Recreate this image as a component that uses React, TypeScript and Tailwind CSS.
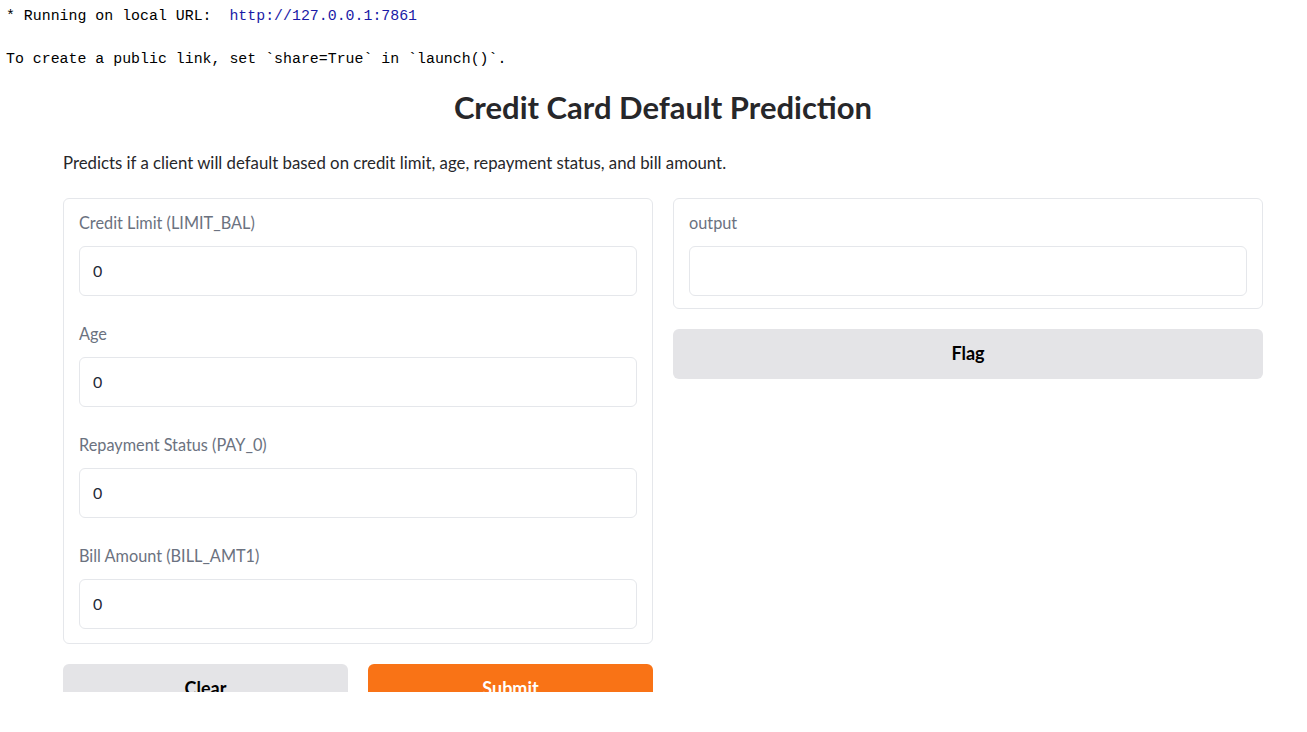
import React from "react";

const sans = { fontFamily: "Lato, 'Noto Sans', sans-serif" };

function Field({ label, value }: { label: string; value: string }) {
  return (
    <div className="flex flex-col">
      <div className="h-[24px] leading-[24px] text-[16.3px] text-[#6b7280] mb-[11px]">{label}</div>
      <div className="h-[50px] rounded-[6px] border border-[#e5e7eb] bg-white flex items-center px-[13px] text-[16px] text-[#1f2937]">
        {value}
      </div>
    </div>
  );
}

export default function App() {
  return (
    <div className="bg-white w-[1307px] h-[732px]">
      <div className="h-[692px] overflow-hidden">
        <pre
          className="px-[6px] pt-[6px] text-[14.9px] leading-[21.5px] text-black m-0"
          style={{ fontFamily: "'Liberation Mono', monospace" }}
        >
          {"* Running on local URL:  "}
          <span className="text-[#1a1aa6]">http://127.0.0.1:7861</span>
          {"\n\nTo create a public link, set `share=True` in `launch()`."}
        </pre>
        <div className="w-[1200px] ml-[63px] mt-[16px]" style={sans}>
          <h1 className="text-center text-[31px] font-bold text-[#27272a] leading-[40px]">
            Credit Card Default Prediction
          </h1>
          <p className="mt-[24px] text-[16.8px] text-[#27272a] leading-[24px]">
            Predicts if a client will default based on credit limit, age, repayment status, and bill amount.
          </p>
          <div className="mt-[23px] flex gap-[20px] items-start">
            <div className="w-[590px] flex flex-col gap-[20px]">
              <div className="rounded-[6px] border border-[#e5e7eb] px-[15px] pt-[12px] pb-[14px] flex flex-col gap-[26px]">
                <Field label="Credit Limit (LIMIT_BAL)" value="0" />
                <Field label="Age" value="0" />
                <Field label="Repayment Status (PAY_0)" value="0" />
                <Field label="Bill Amount (BILL_AMT1)" value="0" />
              </div>
              <div className="flex gap-[20px]">
                <button className="flex-1 h-[50px] rounded-[6px] bg-[#e4e4e7] text-[18px] font-bold text-black">
                  Clear
                </button>
                <button className="flex-1 h-[50px] rounded-[6px] bg-[#f97316] text-[18px] font-bold text-white">
                  Submit
                </button>
              </div>
            </div>
            <div className="w-[590px] flex flex-col gap-[20px]">
              <div className="rounded-[6px] border border-[#e5e7eb] px-[15px] pt-[12px] pb-[12px]">
                <Field label="output" value="" />
              </div>
              <button className="h-[50px] rounded-[6px] bg-[#e4e4e7] text-[18px] font-bold text-black">
                Flag
              </button>
            </div>
          </div>
        </div>
      </div>
    </div>
  );
}
